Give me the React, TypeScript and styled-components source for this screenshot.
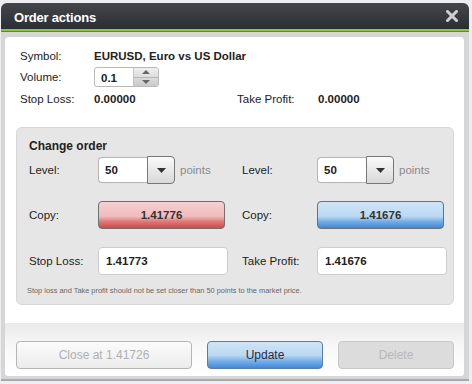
import React from "react";
import styled, { createGlobalStyle, css } from "styled-components";

const GlobalStyle = createGlobalStyle`
    html, body {
        margin: 0;
        padding: 0;
        background: #eceef2;
        font-family: "Liberation Sans", Arial, sans-serif;
        font-size: 11.5px;
        color: #222;
    }
`;

const Dialog = styled.div`
    width: 468px;
    margin: 3px 0 0 1px;
    border-radius: 6px 6px 0 0;
    overflow: hidden;
    background: #d6d6d6;
    border-bottom: 2px solid #a9a9a9;
`;

const Header = styled.div`
    height: 26px;
    display: flex;
    align-items: center;
    justify-content: space-between;
    padding: 0 11px 0 13px;
    background: linear-gradient(#43474c, #2b2e32);
    border-bottom: 2px solid #8cc63f;
    box-shadow: 0 1px 0 #5e8c1f;
`;

const Title = styled.div`
    color: #fff;
    font-weight: bold;
    font-size: 13px;
    letter-spacing: -0.2px;
    margin-top: 3px;
`;

const Body = styled.div`
    padding: 6px 5px 3px 4px;
`;

const Panel = styled.div`
    height: 339px;
    background: #fff;
    border-radius: 4px;
    display: flex;
    flex-direction: column;
    overflow: hidden;
`;

const Info = styled.div`
    padding: 10px 0 0 15px;
`;

const InfoRow = styled.div<{ $h: number }>`
    height: ${(p) => p.$h}px;
    display: flex;
    align-items: center;
`;

const Label = styled.div<{ $w: number }>`
    width: ${(p) => p.$w}px;
    flex-shrink: 0;
`;

const Value = styled.div<{ $w?: number }>`
    font-weight: bold;
    ${(p) => p.$w && css`width: ${p.$w}px;`}
`;

const Spinner = styled.div`
    width: 63px;
    height: 18px;
    border: 1px solid #b9b9b9;
    border-radius: 3px;
    display: flex;
    overflow: hidden;
`;

const SpinValue = styled.div`
    flex: 1;
    padding-left: 6px;
    font-weight: bold;
    display: flex;
    align-items: center;
    padding-top: 2px;
`;

const SpinButtons = styled.div`
    width: 24px;
    display: flex;
    flex-direction: column;
    border-left: 1px solid #c4c4c4;
    background: linear-gradient(#f0f0f0, #c9c9c9);
`;

const SpinHalf = styled.div`
    flex: 1;
    display: flex;
    align-items: center;
    justify-content: center;
    & + & {
        border-top: 1px solid #b5b5b5;
    }
`;

const OrderBox = styled.div`
    margin: 18px 10px 0 11px;
    padding: 10px 0 8px 12px;
    background: #e6e6e6;
    border: 1px solid #d6d6d6;
    border-radius: 6px;
`;

const BoxTitle = styled.div`
    font-weight: bold;
    font-size: 12px;
    line-height: 16px;
`;

const FieldGrid = styled.div<{ $top: number }>`
    display: grid;
    grid-template-columns: 213px 1fr;
    margin-top: ${(p) => p.$top}px;
    height: 28px;
`;

const Field = styled.div`
    display: flex;
    align-items: center;
`;

const LevelInput = styled.div`
    width: 49px;
    height: 26px;
    background: #fff;
    border: 1px solid #b4b4b4;
    border-right: none;
    border-radius: 4px 0 0 4px;
    font-weight: bold;
    padding-left: 6px;
    box-sizing: border-box;
    display: flex;
    align-items: center;
`;

const DropButton = styled.div`
    width: 28px;
    height: 28px;
    box-sizing: border-box;
    border: 1px solid #777;
    border-radius: 0 4px 4px 0;
    background: linear-gradient(#fafafa, #d8d8d8);
    display: flex;
    align-items: center;
    justify-content: center;
`;

const Units = styled.span`
    color: #8a8a8a;
    margin-left: 5px;
`;

const CopyButton = styled.div<{ $tone: "red" | "blue" }>`
    width: 127px;
    height: 28px;
    box-sizing: border-box;
    border: 1px solid #707070;
    border-radius: 4px;
    font-weight: bold;
    color: #333;
    display: flex;
    align-items: center;
    justify-content: center;
    background: ${(p) =>
        p.$tone === "red"
            ? "linear-gradient(#f6d0d0, #f0bcbc 55%, #e07878 75%, #d04848)"
            : "linear-gradient(#cfe4f7, #bcd9f3 55%, #75aee6 75%, #3f86d6)"};
`;

const PriceInput = styled.div<{ $w: number }>`
    width: ${(p) => p.$w}px;
    height: 28px;
    box-sizing: border-box;
    background: #fff;
    border: 1px solid #cdcdcd;
    border-radius: 4px;
    font-weight: bold;
    padding-left: 7px;
    display: flex;
    align-items: center;
`;

const Note = styled.div`
    margin-top: 11px;
    font-size: 7.4px;
    line-height: 10px;
    color: #666;
    margin-left: -2px;
`;

const Footer = styled.div`
    flex: 1;
    margin-top: 18px;
    padding: 18px 0 0 11px;
    display: flex;
    gap: 15px;
    background: linear-gradient(#e9e9e9, #f8f8f8 45%, #fff);
`;

const ActionButton = styled.div<{ $w: number; $kind: "light" | "primary" | "disabled" }>`
    width: ${(p) => p.$w}px;
    height: 28px;
    box-sizing: border-box;
    border-radius: 4px;
    display: flex;
    align-items: center;
    justify-content: center;
    font-size: 12px;
    ${(p) =>
        p.$kind === "light" &&
        css`
            border: 1px solid #b5b5b5;
            color: #b0b0b0;
            background: linear-gradient(#fbfbfb, #ececec);
        `}
    ${(p) =>
        p.$kind === "primary" &&
        css`
            border: 1px solid #5a7ca6;
            color: #2a2a40;
            background: linear-gradient(#cfe4f7, #bcd9f3 50%, #74ade6 75%, #4089d8);
        `}
    ${(p) =>
        p.$kind === "disabled" &&
        css`
            border: 1px solid #c8c8c8;
            color: #b8b8b8;
            background: #dcdcdc;
        `}
`;

const CloseIcon = () => (
    <svg width="12" height="12" viewBox="0 0 12 12">
        <path d="M1.5 1.5 L10.5 10.5 M10.5 1.5 L1.5 10.5" stroke="#d0d0d0" strokeWidth="3" strokeLinecap="square" />
    </svg>
);

const Caret = ({ up }: { up?: boolean }) => (
    <svg width="8" height="4" viewBox="0 0 8 4">
        <path d={up ? "M0 4 L4 0 L8 4 Z" : "M0 0 L8 0 L4 4 Z"} fill="#666" />
    </svg>
);

const LevelField = ({ label, w }: { label: string; w: number }) => (
    <Field>
        <Label $w={w}>{label}</Label>
        <LevelInput>50</LevelInput>
        <DropButton>
            <svg width="9" height="5" viewBox="0 0 9 5">
                <path d="M0 0 L9 0 L4.5 5 Z" fill="#333" />
            </svg>
        </DropButton>
        <Units>points</Units>
    </Field>
);

export default function App() {
    return (
        <>
            <GlobalStyle />
            <Dialog>
                <Header>
                    <Title>Order actions</Title>
                    <CloseIcon />
                </Header>
                <Body>
                    <Panel>
                        <Info>
                            <InfoRow $h={18}>
                                <Label $w={74}>Symbol:</Label>
                                <Value>EURUSD, Euro vs US Dollar</Value>
                            </InfoRow>
                            <InfoRow $h={24}>
                                <Label $w={74}>Volume:</Label>
                                <Spinner>
                                    <SpinValue>0.1</SpinValue>
                                    <SpinButtons>
                                        <SpinHalf>
                                            <Caret up />
                                        </SpinHalf>
                                        <SpinHalf>
                                            <Caret />
                                        </SpinHalf>
                                    </SpinButtons>
                                </Spinner>
                            </InfoRow>
                            <InfoRow $h={20}>
                                <Label $w={74}>Stop Loss:</Label>
                                <Value $w={143}>0.00000</Value>
                                <Label $w={81}>Take Profit:</Label>
                                <Value>0.00000</Value>
                            </InfoRow>
                        </Info>

                        <OrderBox>
                            <BoxTitle>Change order</BoxTitle>
                            <FieldGrid $top={2}>
                                <LevelField label="Level:" w={69} />
                                <LevelField label="Level:" w={75} />
                            </FieldGrid>
                            <FieldGrid $top={17}>
                                <Field>
                                    <Label $w={69}>Copy:</Label>
                                    <CopyButton $tone="red">1.41776</CopyButton>
                                </Field>
                                <Field>
                                    <Label $w={75}>Copy:</Label>
                                    <CopyButton $tone="blue">1.41676</CopyButton>
                                </Field>
                            </FieldGrid>
                            <FieldGrid $top={18}>
                                <Field>
                                    <Label $w={69}>Stop Loss:</Label>
                                    <PriceInput $w={130}>1.41773</PriceInput>
                                </Field>
                                <Field>
                                    <Label $w={75}>Take Profit:</Label>
                                    <PriceInput $w={130}>1.41676</PriceInput>
                                </Field>
                            </FieldGrid>
                            <Note>
                                Stop loss and Take profit should not be set closer than 50 points to the market price.
                            </Note>
                        </OrderBox>

                        <Footer>
                            <ActionButton $w={176} $kind="light">
                                Close at 1.41726
                            </ActionButton>
                            <ActionButton $w={116} $kind="primary">
                                Update
                            </ActionButton>
                            <ActionButton $w={116} $kind="disabled">
                                Delete
                            </ActionButton>
                        </Footer>
                    </Panel>
                </Body>
            </Dialog>
        </>
    );
}
